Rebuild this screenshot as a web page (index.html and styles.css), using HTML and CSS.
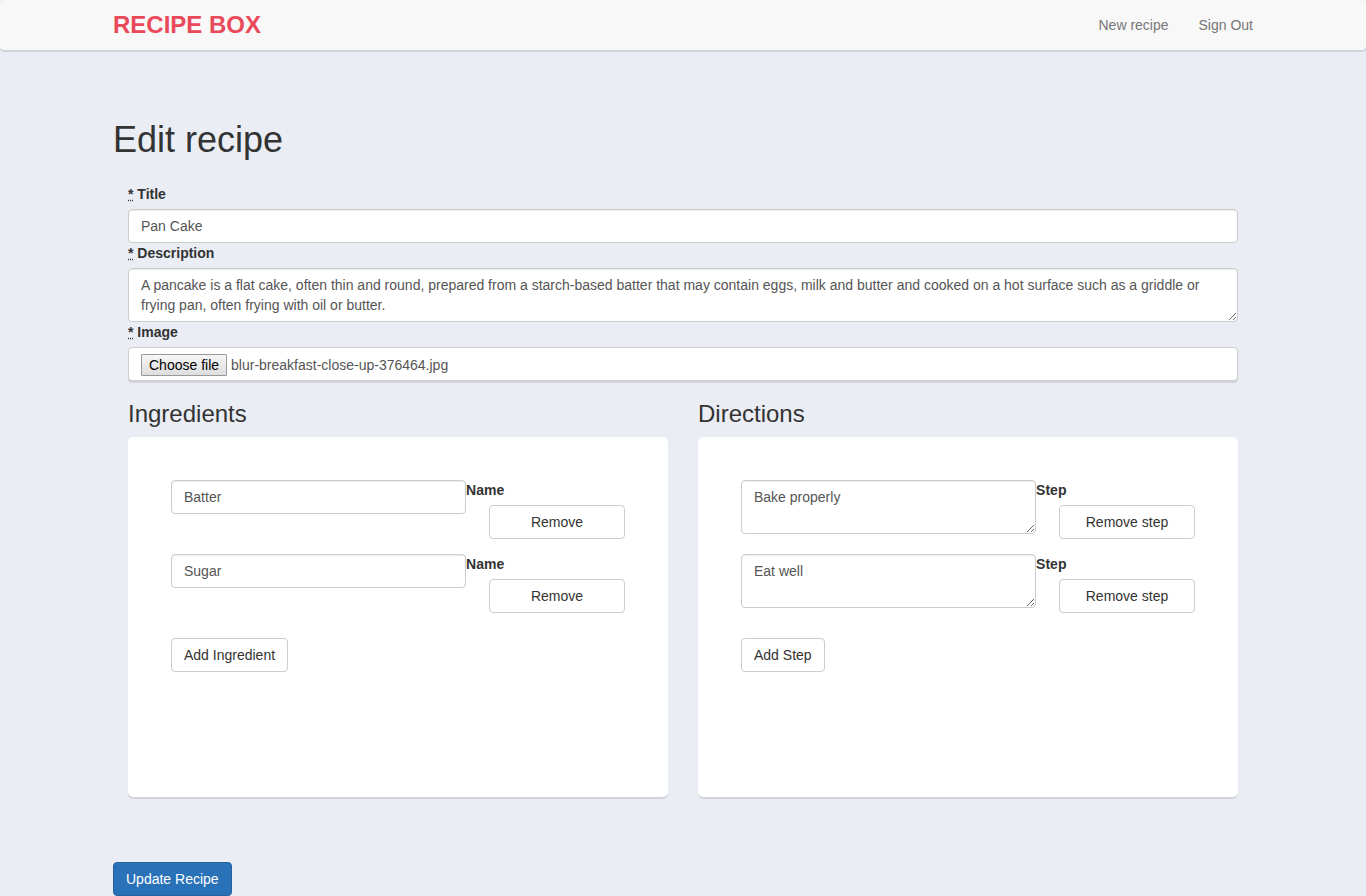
FILE: index.html
```html
<!DOCTYPE html>
<html lang="en">
<head>
<meta charset="utf-8">
<meta name="viewport" content="width=device-width, initial-scale=1">
<title>Edit recipe - Recipe Box</title>
<link rel="stylesheet" href="styles.css">
</head>
<body>
<nav class="navbar">
  <div class="container navbar-inner">
    <a class="brand" href="#">RECIPE BOX</a>
    <div class="nav-links">
      <a href="#">New recipe</a>
      <a href="#">Sign Out</a>
    </div>
  </div>
</nav>
<main class="container">
  <h1>Edit recipe</h1>
  <form class="recipe-form">
    <div class="panel-body">
      <div class="field">
        <label for="title"><abbr title="required">*</abbr> Title</label>
        <input class="control" id="title" type="text" value="Pan Cake">
      </div>
      <div class="field">
        <label for="description"><abbr title="required">*</abbr> Description</label>
        <textarea class="control" id="description" rows="2">A pancake is a flat cake, often thin and round, prepared from a starch-based batter that may contain eggs, milk and butter and cooked on a hot surface such as a griddle or frying pan, often frying with oil or butter.</textarea>
      </div>
      <div class="field">
        <label for="image"><abbr title="required">*</abbr> Image</label>
        <div class="control file-control">
          <span class="file-button">Choose file</span>
          <span>blur-breakfast-close-up-376464.jpg</span>
          <input class="file-input" id="image" type="file">
        </div>
      </div>
      <div class="columns">
        <section>
          <h3>Ingredients</h3>
          <div class="card">
            <div class="item">
              <input class="control" id="ingredient-1" type="text" value="Batter">
              <div class="item-side">
                <label for="ingredient-1">Name</label>
                <button class="btn btn-remove" type="button">Remove</button>
              </div>
            </div>
            <div class="item">
              <input class="control" id="ingredient-2" type="text" value="Sugar">
              <div class="item-side">
                <label for="ingredient-2">Name</label>
                <button class="btn btn-remove" type="button">Remove</button>
              </div>
            </div>
            <button class="btn btn-add" type="button">Add Ingredient</button>
          </div>
        </section>
        <section>
          <h3>Directions</h3>
          <div class="card">
            <div class="item">
              <textarea class="control" id="step-1" rows="2">Bake properly</textarea>
              <div class="item-side">
                <label for="step-1">Step</label>
                <button class="btn btn-remove" type="button">Remove step</button>
              </div>
            </div>
            <div class="item">
              <textarea class="control" id="step-2" rows="2">Eat well</textarea>
              <div class="item-side">
                <label for="step-2">Step</label>
                <button class="btn btn-remove" type="button">Remove step</button>
              </div>
            </div>
            <button class="btn btn-add" type="button">Add Step</button>
          </div>
        </section>
      </div>
    </div>
    <button class="btn btn-primary" type="submit">Update Recipe</button>
  </form>
</main>
</body>
</html>
```
FILE: styles.css
```css
*,
*::before,
*::after {
  box-sizing: border-box;
}

body {
  margin: 0;
  background: #eaedf4;
  color: #333;
  font-family: "Liberation Sans", Arial, sans-serif;
  font-size: 14px;
  line-height: 20px;
}

a {
  text-decoration: none;
}

.container {
  max-width: 1170px;
  margin: 0 auto;
  padding: 0 15px;
}

.navbar {
  background: #f8f8f8;
  border-radius: 4px;
  box-shadow: 0 2px 0 rgba(0, 0, 0, 0.1);
}

.navbar-inner {
  display: flex;
  align-items: center;
  justify-content: space-between;
  min-height: 50px;
}

.brand {
  color: #e84a5a;
  font-size: 24px;
  font-weight: bold;
}

.nav-links {
  display: flex;
  gap: 30px;
}

.nav-links a {
  color: #777;
}

h1,
h3 {
  margin: 0;
  font-weight: normal;
}

h1 {
  margin-top: 70px;
  font-size: 36px;
  line-height: 40px;
}

h3 {
  margin-bottom: 10px;
  font-size: 24px;
  line-height: 26px;
}

.panel-body {
  padding: 24px 15px 65px;
}

label {
  display: block;
  font-weight: bold;
}

.field label {
  margin-bottom: 5px;
}

abbr {
  text-decoration: underline dotted #333;
}

.control {
  display: block;
  width: 100%;
  margin: 0;
  padding: 6px 12px;
  border: 1px solid #ccc;
  border-radius: 4px;
  background: #fff;
  box-shadow: inset 0 1px 1px rgba(0, 0, 0, 0.08);
  color: #555;
  font: inherit;
}

textarea.control {
  resize: vertical;
  overflow: auto;
}

.file-control {
  position: relative;
  display: flex;
  align-items: center;
  gap: 4px;
  height: 34px;
  padding: 6px 12px 4px;
  box-shadow: 0 2px 0 rgba(0, 0, 0, 0.1);
}

.file-button {
  padding: 0 7px;
  border: 1px solid #999;
  border-radius: 1px;
  background: linear-gradient(#f6f6f6, #dedede);
  color: #000;
}

.file-input {
  position: absolute;
  inset: 0;
  width: 100%;
  opacity: 0;
  cursor: pointer;
}

.columns {
  display: grid;
  grid-template-columns: 1fr 1fr;
  gap: 30px;
  margin-top: 20px;
}

.card {
  min-height: 360px;
  padding: 43px;
  border-radius: 5px;
  background: #fff;
  box-shadow: 0 2px 0 rgba(0, 0, 0, 0.1);
}

.item {
  display: grid;
  grid-template-columns: 65% 35%;
  align-items: start;
  margin-bottom: 15px;
}

.item-side {
  display: flex;
  flex-direction: column;
  gap: 5px;
}

.btn {
  padding: 6px 12px;
  border: 1px solid #ccc;
  border-radius: 4px;
  background: #fff;
  color: #333;
  font: inherit;
  cursor: pointer;
}

.btn-remove {
  align-self: flex-end;
  width: 136px;
  max-width: 100%;
}

.btn-add {
  margin-top: 10px;
}

.btn-primary {
  display: block;
  border-color: #2662a0;
  background: #2a72b8;
  color: #fff;
}

@media (max-width: 800px) {
  .columns {
    grid-template-columns: 1fr;
  }
}
```
